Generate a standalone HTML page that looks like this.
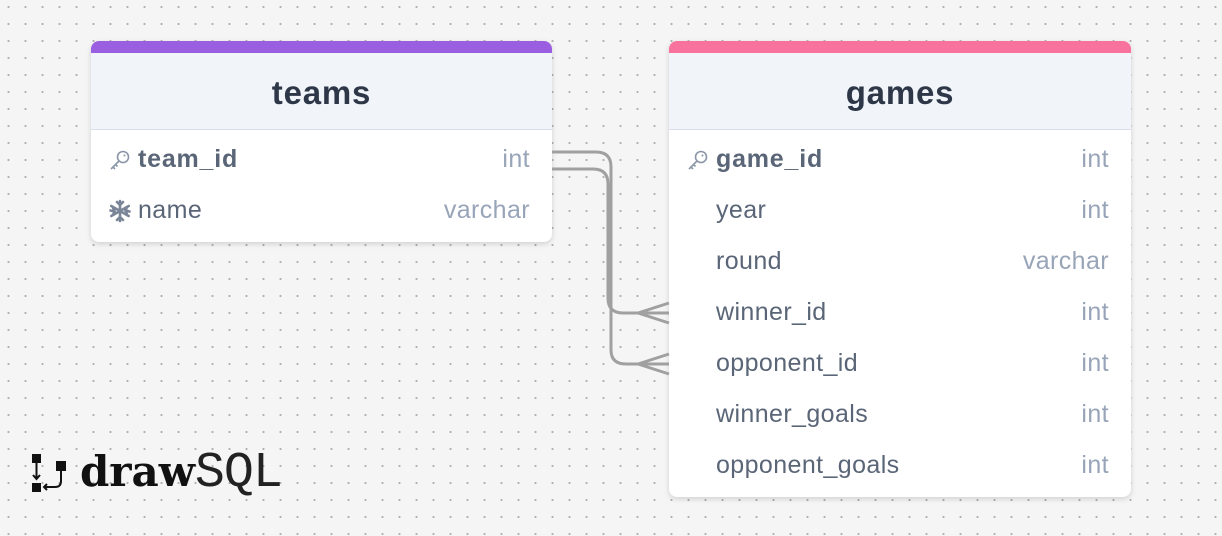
<!DOCTYPE html>
<html><head><meta charset="utf-8"><style>
*{margin:0;padding:0;box-sizing:border-box}
body{width:1222px;height:536px;overflow:hidden;background-color:#f5f5f5;background-image:radial-gradient(circle,#b0b0b0 0.9px,transparent 1.3px);background-size:17px 17px;background-position:0px -1.5px;font-family:"Liberation Sans",sans-serif;position:relative}
.t{position:absolute;top:41px;background:#fff;border-radius:8px;box-shadow:0 2px 6px rgba(0,0,0,.15);overflow:hidden}
.bar{height:12px}
.hd{height:77px;background:#f1f4f9;border-bottom:1.5px solid #d8dfe8;text-align:center;font-weight:bold;font-size:33px;letter-spacing:0.8px;color:#2d3748;line-height:80px}
.r{height:51px;position:relative;font-size:25px;letter-spacing:0.4px;color:#5a6677;line-height:51px}
.r .n{position:absolute;left:47px}
.r .ty{position:absolute;right:22px;color:#98a4b8}
.r .ic{position:absolute;left:18px;top:0;color:#8a96a8;font-size:20px}
b{font-weight:bold;letter-spacing:0.8px}
</style></head><body>
<div class="t" style="left:91px;width:461px;height:201px">
<div class="bar" style="background:#9a5fe0"></div>
<div class="hd">teams</div>
<div class="r" style="margin-top:4px"><svg class="ic" style="top:14px;left:17px" width="24" height="24" viewBox="0 0 24 24" fill="none" stroke="#8a96a8" stroke-width="1.6"><circle cx="15" cy="9" r="5.5"/><circle cx="16.5" cy="7.5" r="1" fill="#8a96a8" stroke="none"/><path d="M11 13L3 21M5 19l2 2M7.5 16.5l2 2"/></svg><span class="n"><b>team_id</b></span><span class="ty">int</span></div>
<div class="r"><svg class="ic" style="top:14px;left:17px" width="24" height="24" viewBox="0 0 24 24" stroke="#7a8698" stroke-width="2.6" stroke-linecap="round" fill="none"><path d="M12 2V22M3.3 7L20.7 17M3.3 17L20.7 7M9 3l3 3 3-3M9 21l3-3 3 3M2.5 11.5l4 1-1.5 3.5M21.5 12.5l-4-1 1.5-3.5M5 8l1 4M19 16l-1-4"/></svg><span class="n">name</span><span class="ty">varchar</span></div>
</div>
<div class="t" style="left:669px;width:462px;height:456px">
<div class="bar" style="background:#f7729c"></div>
<div class="hd">games</div>
<div class="r" style="margin-top:4px"><svg class="ic" style="top:14px;left:17px" width="24" height="24" viewBox="0 0 24 24" fill="none" stroke="#8a96a8" stroke-width="1.6"><circle cx="15" cy="9" r="5.5"/><circle cx="16.5" cy="7.5" r="1" fill="#8a96a8" stroke="none"/><path d="M11 13L3 21M5 19l2 2M7.5 16.5l2 2"/></svg><span class="n"><b>game_id</b></span><span class="ty">int</span></div>
<div class="r"><span class="n">year</span><span class="ty">int</span></div>
<div class="r"><span class="n">round</span><span class="ty">varchar</span></div>
<div class="r"><span class="n">winner_id</span><span class="ty">int</span></div>
<div class="r"><span class="n">opponent_id</span><span class="ty">int</span></div>
<div class="r"><span class="n">winner_goals</span><span class="ty">int</span></div>
<div class="r"><span class="n">opponent_goals</span><span class="ty">int</span></div>
</div>
<svg style="position:absolute;left:0;top:0" width="1222" height="536" fill="none" stroke="#a0a0a0" stroke-width="3">
<path d="M552 152H596Q611 152 611 167V350Q611 364 626 364H669"/>
<path d="M552 169H593Q608 169 608 184V298Q608 313 623 313H669"/>
<path d="M638 313L669 303M638 313L669 323M638 364L669 354M638 364L669 374"/>
</svg>
<svg style="position:absolute;left:30px;top:452px" width="42" height="42" viewBox="0 0 42 42">
<rect x="2" y="2" width="9" height="9" fill="#111"/><rect x="2" y="31" width="9" height="9" fill="#111"/><rect x="26" y="9" width="10" height="10" fill="#111"/>
<path d="M6.5 11V26M3 23l3.5 4 3.5-4M31 19v10q0 6-6 6h-11M17 32l-3 3 3 3" stroke="#111" stroke-width="2" fill="none"/>
</svg>
<div style="position:absolute;left:80px;top:444px;font-size:44px;line-height:56px;color:#111;white-space:nowrap"><b style="font-family:'DejaVu Serif','Liberation Serif',serif;font-size:42px;letter-spacing:0">draw</b><span style="font-family:'Liberation Mono',monospace;font-size:50px;letter-spacing:-1px;-webkit-text-stroke:0;color:#222">SQL</span></div>
</body></html>
